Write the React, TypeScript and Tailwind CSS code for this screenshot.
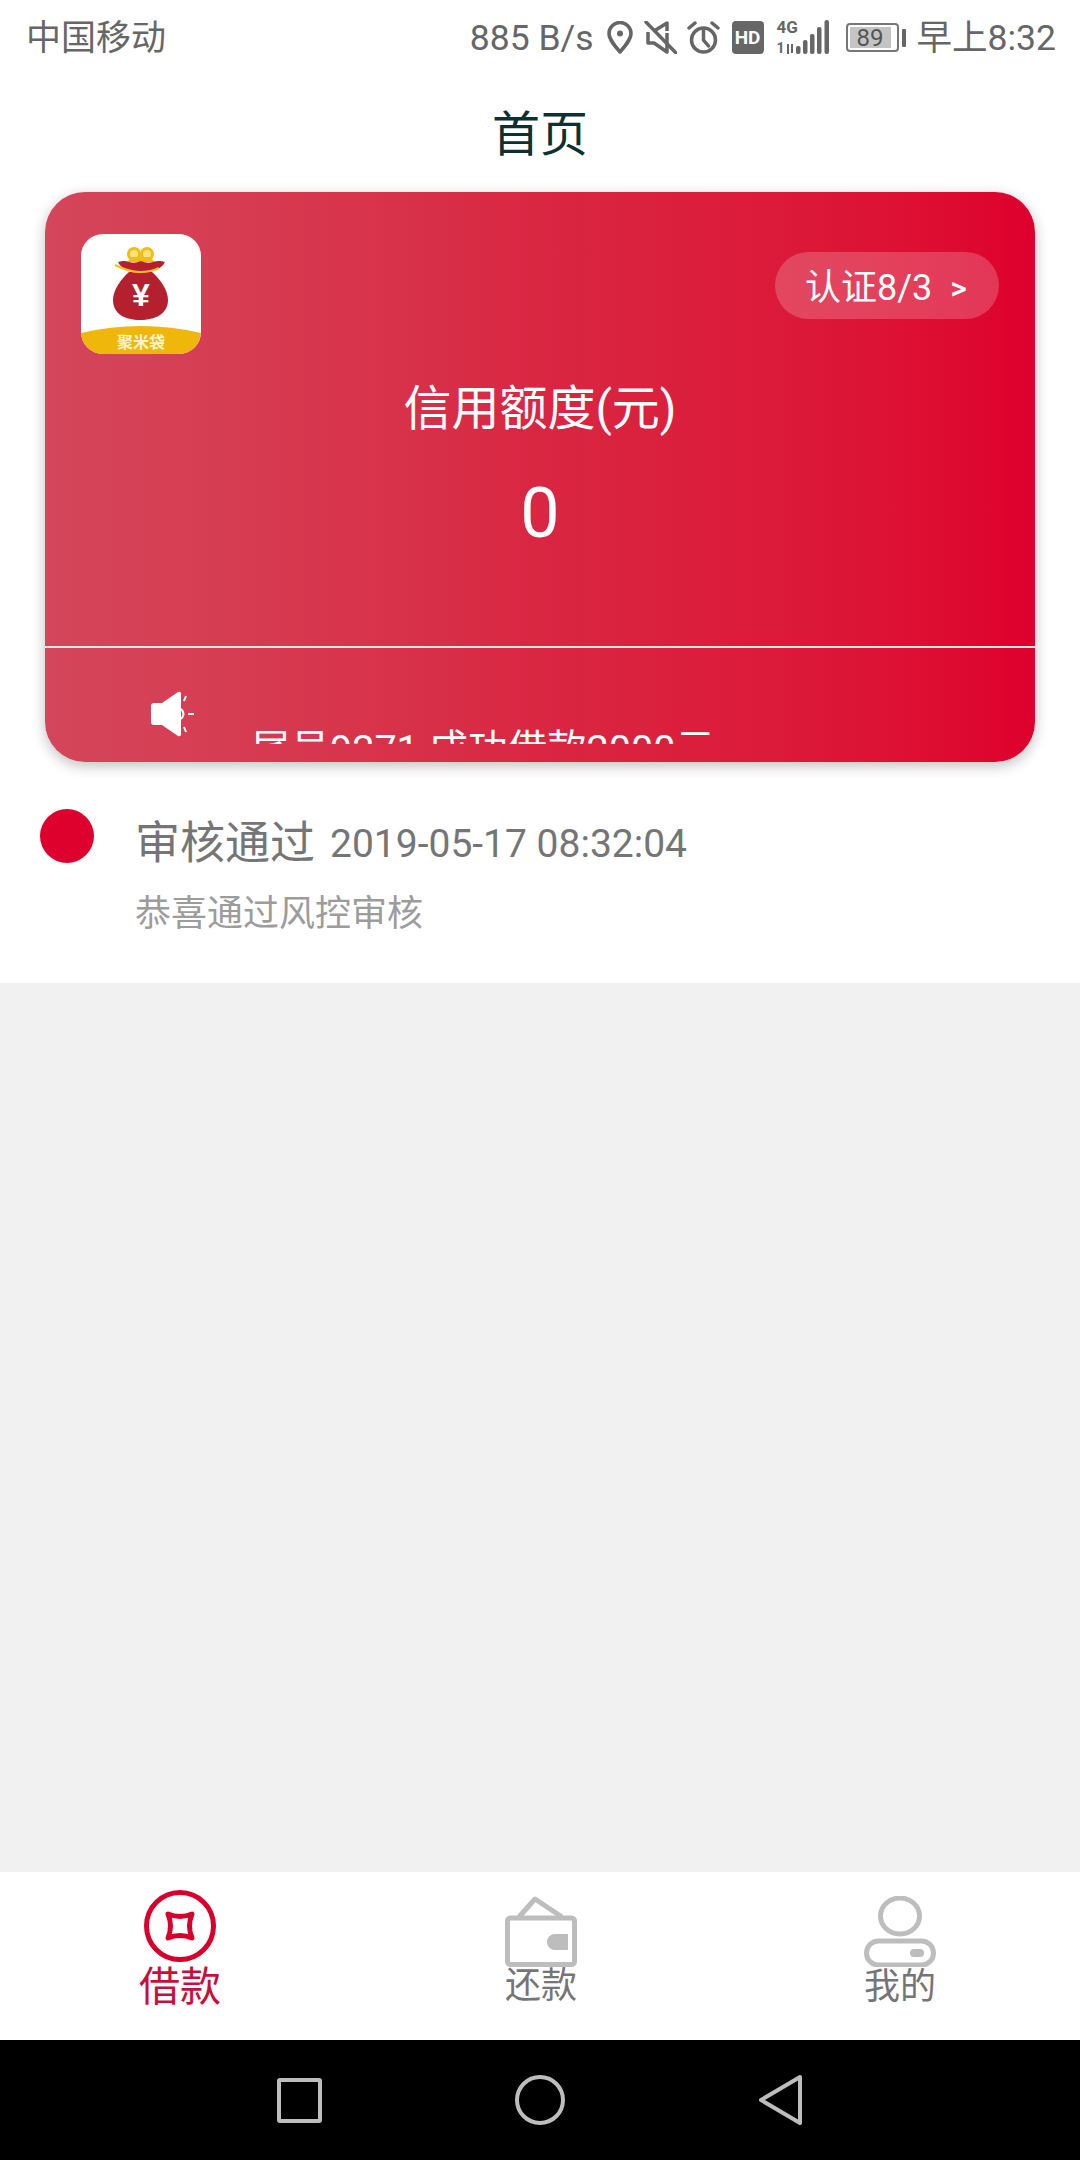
const cjk = "font-['Roboto','Noto_Sans_CJK_SC',sans-serif]";

function StatusIcons() {
  return (
    <div className="flex items-center">
      {/* location */}
      <svg className="ml-[13px]" width="26" height="33" viewBox="0 0 26 33" fill="none" stroke="#666" strokeWidth="3.500">
        <path d="M13 31C7 24 2 18 2 12.500a11 11 0 0 1 22 0C24 18 19 24 13 31z" strokeLinejoin="round" />
        <circle cx="13" cy="12.500" r="3" fill="#666" stroke="none" />
      </svg>
      {/* muted */}
      <svg className="ml-[11px]" width="33" height="33" viewBox="0 0 33 33" fill="none" stroke="#666" strokeWidth="3.500">
        <path d="M4 11v11h6l13 9V12M10 10l13-8v8" strokeLinejoin="round" />
        <path d="M2 1l30 31" strokeLinecap="round" />
      </svg>
      {/* alarm */}
      <svg className="ml-[10px]" width="33" height="33" viewBox="0 0 33 33" fill="none" stroke="#666" strokeWidth="3.500">
        <circle cx="16.500" cy="19" r="12" />
        <path d="M16.500 10v9l5 6M2 7l6-5M31 7l-6-5" strokeLinecap="round" />
      </svg>
      <div className="ml-[12px] flex h-[33px] w-[32px] items-center justify-center rounded-[4px] bg-[#666] font-['Roboto',sans-serif] text-[19px] font-bold leading-none text-white">
        HD
      </div>
      {/* 4G signal */}
      <div className="relative ml-[13px] h-[35px] w-[54px]">
        <span className="absolute left-0 top-0 font-['Roboto',sans-serif] text-[17px] font-bold leading-[15px] text-[#666]">4G</span>
        <span className="absolute left-0 top-[21px] font-['Roboto',sans-serif] text-[14px] font-bold leading-[14px] text-[#666]">1</span>
        <svg className="absolute left-0 top-0" width="54" height="35" viewBox="0 0 54 35" fill="#666">
          <path d="M11 24v10M15 24v9" stroke="#666" strokeWidth="2" />
          <rect x="19" y="26" width="4.500" height="8" rx="2" />
          <rect x="26" y="20" width="4.500" height="14" rx="2" />
          <rect x="33" y="14" width="4.500" height="20" rx="2" />
          <rect x="40" y="7" width="4.500" height="27" rx="2" />
          <rect x="47.500" y="0" width="4.500" height="34" rx="2" />
        </svg>
      </div>
      {/* battery */}
      <div className="ml-[15px] flex h-[29px] w-[53px] items-center rounded-[4px] border-2 border-[#777] p-[2px]">
        <div className="flex h-full w-[41px] items-center justify-center bg-[#c4c4c4] font-['Roboto',sans-serif] text-[24px] leading-none text-[#555]">
          89
        </div>
      </div>
      <div className="ml-[3px] h-[18px] w-[4px] rounded-[1px] bg-[#666]" />
    </div>
  );
}

function BagLogo() {
  return (
    <div className="relative h-[120px] w-[120px] overflow-hidden rounded-[22px] bg-white">
      <svg className="absolute left-0 top-0" width="120" height="120" viewBox="0 0 120 120">
        <path d="M0 99Q60 85 120 99V120H0z" fill="#efb70c" />
        <circle cx="53" cy="20" r="5.500" fill="#fbe27a" stroke="#f0bd12" strokeWidth="3" />
        <circle cx="66" cy="20" r="5.500" fill="#fbe27a" stroke="#f0bd12" strokeWidth="3" />
        <path d="M46 28l5-5h18l5 5z" fill="#f0bd12" />
        <path d="M37 28q6-2 11 0 6 2 12-1 6 3 12 1 6-2 12 0-3 7-14 9H50Q40 35 37 28z" fill="#b5202e" />
        <path d="M48 38C40 45 32 56 32 66c0 14 12 20 27 20s28-6 28-20c0-10-8-21-16-28z" fill="#b5202e" />
        <path d="M34 31q14 7 25 7t19-4" fill="none" stroke="#f3c51b" strokeWidth="2" />
      </svg>
      <span className="absolute left-[35px] top-[43px] w-[50px] text-center font-['Liberation_Sans',sans-serif] text-[32px] font-bold leading-[36px] text-white">
        ¥
      </span>
      <span className="absolute bottom-[2px] left-0 w-full text-center font-['Noto_Sans_CJK_SC',sans-serif] text-[16px] font-bold leading-[22px] text-[#fff3cc]">
        聚米袋
      </span>
    </div>
  );
}

function Card() {
  return (
    <section className="relative z-10 mx-[45px] h-[570px] overflow-hidden rounded-[40px] bg-gradient-to-r from-[#d4465b] via-[#d92642] via-[50%] to-[#de002d] text-white shadow-[0_4px_14px_rgba(0,0,0,0.25)]">
      <div className="h-[454px]">
        <div className="flex items-start justify-between pl-[36px] pr-[36px] pt-[42px]">
          <BagLogo />
          <div className="mt-[18px] flex h-[67px] w-[224px] items-center justify-center rounded-full bg-white/20 pr-[2px] pt-[4px] text-[36px]">
            认证8/3
            <span className="ml-[18px] text-[32px] font-medium">&gt;</span>
          </div>
        </div>
        <div className="mt-[27px] text-center text-[48px] leading-[56px]">信用额度(元)</div>
        <div className="mt-[38px] text-center text-[70px] leading-[76px]">0</div>
      </div>
      <div className="h-[2px] bg-[#fbe6ea]" />
      <div className="flex">
        <svg className="ml-[105px] mt-[43px]" width="46" height="46" viewBox="0 0 46 46" fill="white">
          <path d="M1 15q0-3 3-3h8L28 1q2-1 3 1v42q-1 2-3 1L12 34H4q-3 0-3-3z" />
          <path d="M36 5l-2 5M38 23h6M36 41l-2-5M31 18q5 5 0 10" fill="none" stroke="white" strokeWidth="2" />
        </svg>
        <div className="ml-[55px] h-[96px] overflow-hidden pt-[78px] text-[39.500px] leading-[48px] whitespace-nowrap">
          尾号9271 成功借款2000元
        </div>
      </div>
    </section>
  );
}

function Timeline() {
  return (
    <section className="-mt-[1px] flex h-[222px] bg-white pl-[40px] pt-[48px]">
      <div className="h-[54px] w-[54px] rounded-full bg-[#de002d]" />
      <div className="ml-[41px]">
        <div className="mt-[7px] flex items-center leading-[56px] text-[#757575]">
          <span className="text-[45px]">审核通过</span>
          <span className="ml-[15px] text-[39px]">2019-05-17 08:32:04</span>
        </div>
        <div className="mt-[20px] text-[36px] leading-[44px] text-[#9c9c9c]">恭喜通过风控审核</div>
      </div>
    </section>
  );
}

function TabBar() {
  return (
    <nav className="flex h-[168px] justify-between bg-white pl-[139px] pr-[144px]">
      <div className="flex w-[82px] flex-col items-center pt-[18px]">
        <svg width="72" height="72" viewBox="0 0 72 72" fill="none" stroke="#d7002c">
          <circle cx="36" cy="36" r="33.500" strokeWidth="5" />
          <path d="M24 24Q36 29 48 24Q43 36 48 48Q36 43 24 48Q29 36 24 24z" strokeWidth="5" strokeLinejoin="round" />
        </svg>
        <span className="mt-[3px] text-[41px] leading-[44px] text-[#c80f3c]">借款</span>
      </div>
      <div className="mr-[3px] flex w-[72px] flex-col items-center pt-[24px]">
        <svg width="72" height="71" viewBox="0 0 72 71" fill="none" stroke="#bdbdbd" strokeWidth="5">
          <rect x="2.500" y="22" width="67" height="46.500" rx="3" strokeLinejoin="round" />
          <path d="M14 21L30 3l27 18" strokeLinejoin="round" />
          <path d="M63 38H50a8 8 0 0 0 0 16h13z" fill="#bdbdbd" stroke="none" />
        </svg>
        <span className="-mt-[2px] text-[36px] leading-[42px] text-[#757575]">还款</span>
      </div>
      <div className="flex w-[72px] flex-col items-center pt-[24px]">
        <svg width="72" height="71" viewBox="0 0 72 71" fill="none" stroke="#bdbdbd" strokeWidth="5">
          <ellipse cx="36" cy="20" rx="19.500" ry="18" />
          <rect x="2.500" y="45" width="67" height="24" rx="12" />
          <rect x="46" y="53" width="14" height="8" rx="4" fill="#bdbdbd" stroke="none" />
        </svg>
        <span className="text-[36px] leading-[40px] text-[#757575]">我的</span>
      </div>
    </nav>
  );
}

function NavBar() {
  return (
    <div className="flex h-[120px] items-center bg-black">
      <div className="ml-[277px] h-[45px] w-[45px] rounded-[3px] border-[4px] border-[#bdbdbd]" />
      <div className="ml-[193px] h-[50px] w-[50px] rounded-full border-[4px] border-[#bdbdbd]" />
      <svg className="ml-[194px]" width="43" height="50" viewBox="0 0 43 50" fill="none" stroke="#bdbdbd" strokeWidth="4" strokeLinejoin="round">
        <path d="M41 2L2 25l39 23z" />
      </svg>
    </div>
  );
}

export default function App() {
  return (
    <div className={`flex h-[2160px] w-[1080px] flex-col bg-[#f1f1f1] ${cjk}`}>
      <header className="bg-white">
        <div className="flex h-[75px] items-center justify-between pl-[26px] pr-[24px] text-[#666]">
          <span className="pt-[3px] text-[35px]">中国移动</span>
          <div className="flex items-center">
            <span className="pt-[3px] text-[35.500px]">885 B/s</span>
            <StatusIcons />
            <span className="ml-[11px] pt-[3px] text-[35.500px]">早上8:32</span>
          </div>
        </div>
        <div className="flex h-[117px] items-start justify-center pt-[31px] text-[48px] leading-[58px] text-[#0d3030]">首页</div>
      </header>
      <div className="bg-white">
        <Card />
      </div>
      <Timeline />
      <div className="flex-1" />
      <TabBar />
      <NavBar />
    </div>
  );
}
